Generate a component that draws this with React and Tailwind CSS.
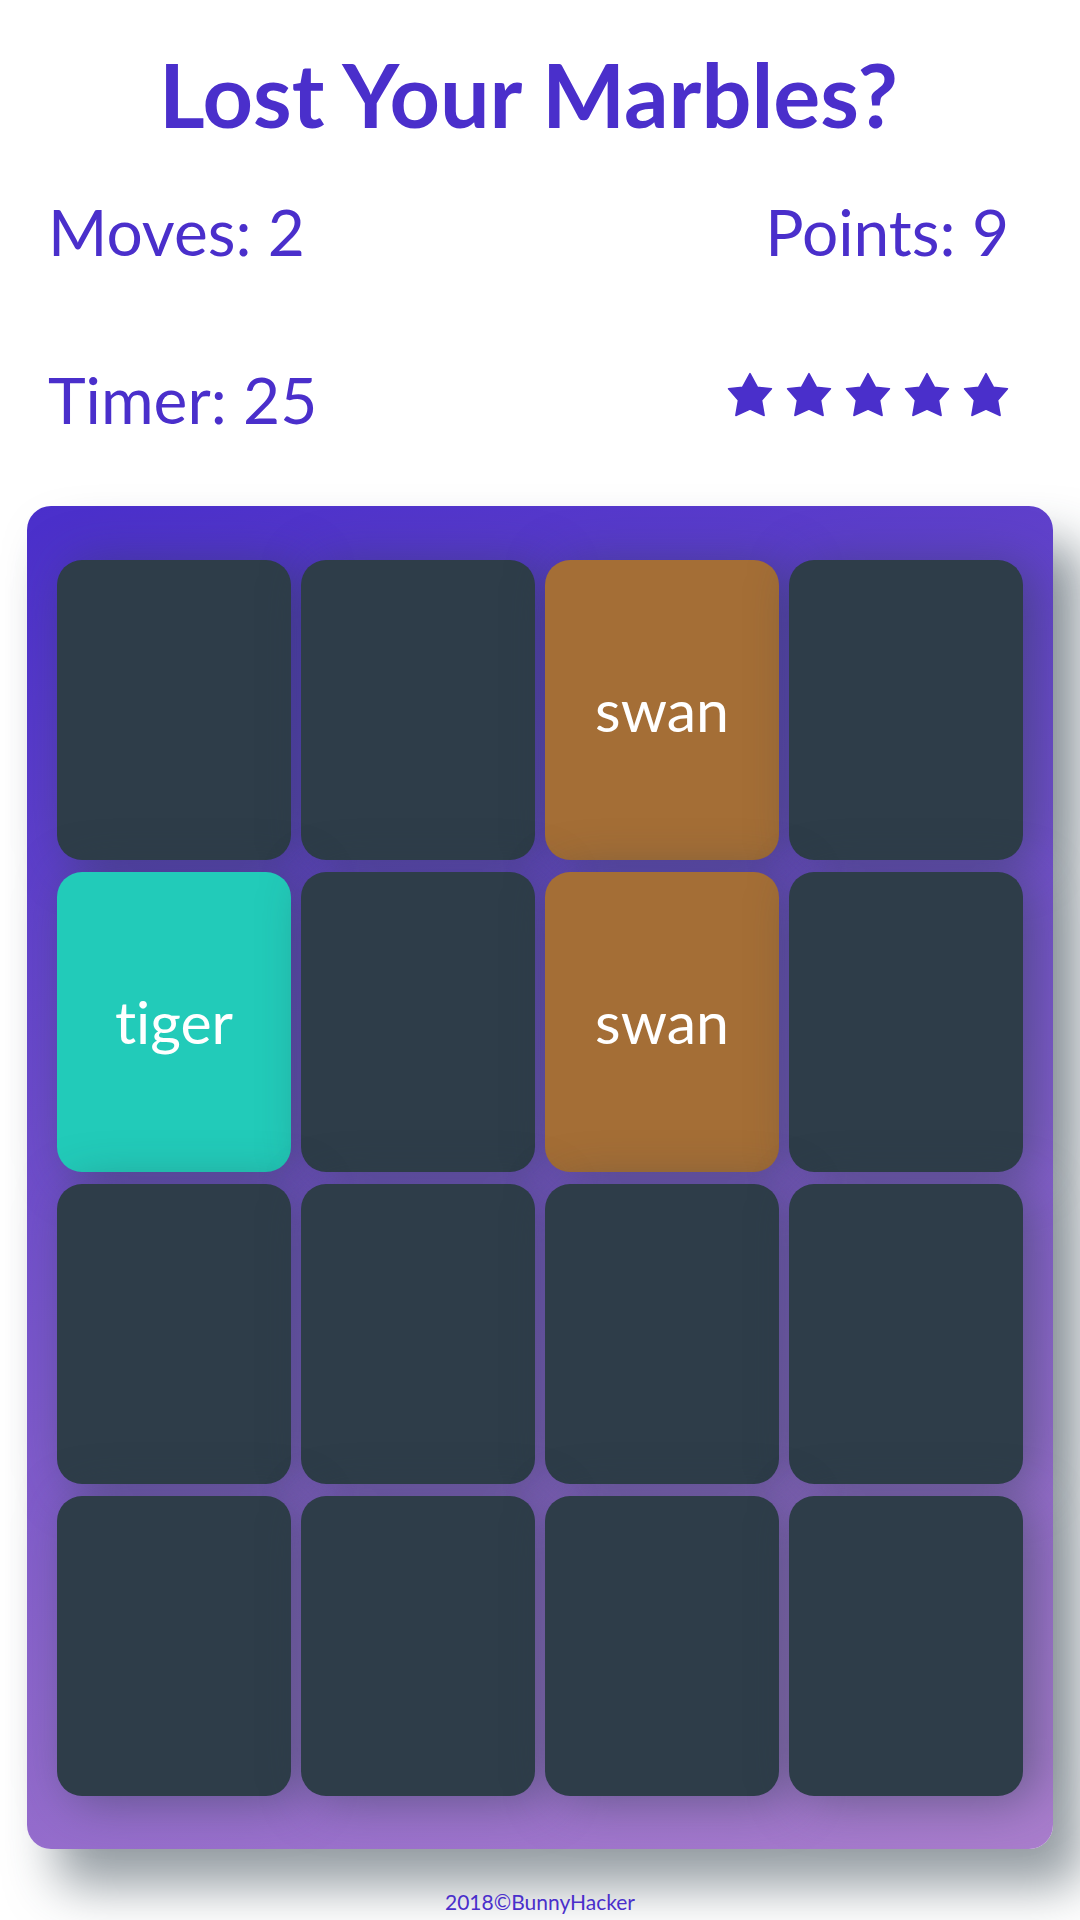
import React from 'react';

const cards = [
  { id: 1, text: '' },
  { id: 2, text: '' },
  { id: 3, text: 'swan', state: 'open' },
  { id: 4, text: '' },
  { id: 5, text: 'tiger', state: 'match' },
  { id: 6, text: '' },
  { id: 7, text: 'swan', state: 'open' },
  { id: 8, text: '' },
  { id: 9, text: '' },
  { id: 10, text: '' },
  { id: 11, text: '' },
  { id: 12, text: '' },
  { id: 13, text: '' },
  { id: 14, text: '' },
  { id: 15, text: '' },
  { id: 16, text: '' },
];

const Star = () => (
  <svg viewBox="0 0 44 43" className="w-[46px] h-[45px]">
    <polygon
      points="22,1.5 29,14.5 42.5,16 33,27 35.5,41.5 22,35.5 8.5,41.5 11,27 1.5,16 15,14.5"
      fill="#4a2fcb"
      stroke="#4a2fcb"
      strokeWidth="1.5"
      strokeLinejoin="round"
    />
  </svg>
);

const Card = ({ card }) => {
  let bg = 'bg-[#2e3d49]';
  if (card.state === 'open') bg = 'bg-[#a46e36]';
  if (card.state === 'match') bg = 'bg-[#22cbb9]';

  return (
    <div
      className={`h-[300px] rounded-[25px] flex items-center justify-center text-white text-[59px] leading-[1.2] shadow-[12px_5px_49px_0_rgba(46,61,73,0.5)] ${bg}`}
    >
      {card.text}
    </div>
  );
};

export default function App() {
  return (
    <div className="min-h-[1920px] bg-white font-['Lato',sans-serif] [font-variant-ligatures:none] text-[#4a2fcb] overflow-hidden">
      {/* Header: title and score panel */}
      <header className="pt-[42px] pl-[48px] pr-[71px]">
        <h1 className="text-center text-[88px] font-bold leading-[1.2]">Lost Your Marbles?</h1>
        <div className="mt-[46px] flex justify-between text-[64px] leading-[1.2]">
          <span>Moves: 2</span>
          <span>Points: 9</span>
        </div>
        <div className="mt-[92px] flex justify-between items-center text-[64px] leading-[1.2]">
          <span>Timer: 25</span>
          <div className="flex gap-[13px] mb-[12px]">
            <Star />
            <Star />
            <Star />
            <Star />
            <Star />
          </div>
        </div>
      </header>

      {/* Deck */}
      <main className="mx-[27px] mt-[67px] rounded-[24px] bg-[linear-gradient(160deg,#4a2fcb_0%,#aa7ecd_100%)] pt-[54px] pb-[53px] px-[30px] grid grid-cols-4 gap-x-[10px] gap-y-[12px] shadow-[29px_37px_49px_0_rgba(46,61,73,0.5)]">
        {cards.map((card) => (
          <Card key={card.id} card={card} />
        ))}
      </main>

      <footer className="mt-[40px] text-center text-[21px] leading-[1.2]">2018©BunnyHacker</footer>
    </div>
  );
}
